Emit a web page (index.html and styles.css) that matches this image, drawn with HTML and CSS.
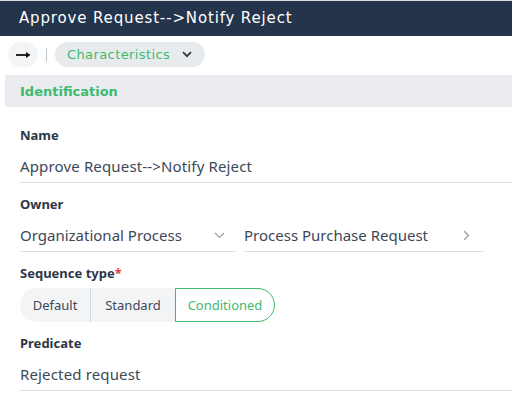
FILE: index.html
```html
<!DOCTYPE html>
<html lang="en">
<head>
    <meta charset="UTF-8">
    <meta name="viewport" content="width=device-width, initial-scale=1.0">
    <title>Approve Request--&gt;Notify Reject</title>
    <link rel="stylesheet" href="styles.css">
</head>
<body>

<header class="title-bar">Approve Request--&gt;Notify Reject</header>

<div class="toolbar">
    <button type="button" class="back-btn" title="Back">
        <svg width="15" height="8" viewBox="0 0 15 8">
            <path d="M0 4H13" stroke="#111" stroke-width="1.8"/>
            <path d="M10 1L14.5 4L10 7Z" fill="#111"/>
        </svg>
    </button>
    <span class="divider"></span>
    <button type="button" class="chip">
        Characteristics
        <svg width="10" height="7" viewBox="0 0 10 7">
            <path d="M1 1.2L5 5.2L9 1.2" fill="none" stroke="#2d3a4b" stroke-width="1.8"/>
        </svg>
    </button>
</div>

<section class="panel">
    <div class="section-head">Identification</div>

    <div class="form">
        <div class="field">
            <label>Name</label>
            <div class="value wide">Approve Request--&gt;Notify Reject</div>
        </div>

        <div class="field">
            <label>Owner</label>
            <div class="owner-row">
                <div class="value select first">
                    <span>Organizational Process</span>
                    <svg width="11" height="7" viewBox="0 0 11 7">
                        <path d="M1 1L5.5 5.5L10 1" fill="none" stroke="#9aa1ab" stroke-width="1.2"/>
                    </svg>
                </div>
                <div class="value select second">
                    <span>Process Purchase Request</span>
                    <svg width="7" height="11" viewBox="0 0 7 11">
                        <path d="M1 1L5.5 5.5L1 10" fill="none" stroke="#9aa1ab" stroke-width="1.4"/>
                    </svg>
                </div>
            </div>
        </div>

        <div class="field">
            <label class="tight">Sequence type<span class="req">*</span></label>
            <div class="segmented">
                <button type="button" class="seg">Default</button>
                <button type="button" class="seg">Standard</button>
                <button type="button" class="seg selected">Conditioned</button>
            </div>
        </div>

        <div class="field">
            <label>Predicate</label>
            <div class="value wide">Rejected request</div>
        </div>
    </div>
</section>

</body>
</html>
```

FILE: styles.css
```css
body {
    margin: 0;
    font-family: "Noto Sans", Arial, sans-serif;
    color: #3c4858;
    background: #fff;
    overflow: hidden;
}
.title-bar {
    background-color: #23344b;
    border-top: 1px solid #d9dde2;
    color: #fff;
    font-family: "DejaVu Sans", sans-serif;
    font-size: 15px;
    letter-spacing: 0.85px;
    height: 35px;
    line-height: 35px;
    padding-left: 19px;
}
.toolbar {
    display: flex;
    align-items: center;
    padding: 6px 0 0 8px;
    height: 25px;
}
.back-btn {
    width: 30px;
    height: 25px;
    border: none;
    border-radius: 13px;
    background-color: #f3f4f6;
    display: flex;
    align-items: center;
    justify-content: center;
    padding: 0;
    cursor: pointer;
}
.divider {
    width: 1px;
    height: 14px;
    background-color: #b9c7d3;
    margin: 0 8px;
}
.chip {
    height: 25px;
    border: none;
    border-radius: 13px;
    background-color: #e8ebee;
    color: #3dba6f;
    font-family: "DejaVu Sans", sans-serif;
    font-size: 13px;
    letter-spacing: 0.4px;
    padding: 0 13px 0 12px;
    display: flex;
    align-items: center;
    gap: 12px;
    cursor: pointer;
}
.panel {
    margin: 8px 0 0 5px;
}
.section-head {
    background-color: #ebecf0;
    height: 32px;
    line-height: 33px;
    padding-left: 15px;
    color: #3dba6f;
    font-family: "DejaVu Sans", sans-serif;
    font-weight: bold;
    font-size: 13px;
}
.form {
    padding: 18px 0 0 15px;
}
.field {
    margin-bottom: 11px;
}
label {
    display: block;
    height: 20px;
    line-height: 20px;
    margin-bottom: 6px;
    font-weight: bold;
    font-size: 13px;
    color: #2d3748;
}
label.tight {
    margin-bottom: 5px;
}
.req {
    color: #e53e3e;
}
.value {
    height: 31px;
    line-height: 31px;
    font-size: 15px;
    border-bottom: 1px solid #dcdfe3;
    color: #3c4858;
}
.value.wide {
    letter-spacing: 0.15px;
}
.owner-row {
    display: flex;
    gap: 8px;
}
.select {
    display: flex;
    align-items: center;
    justify-content: space-between;
}
.select.first {
    width: 216px;
}
.select.first svg {
    margin-right: 11px;
}
.select.second {
    width: 240px;
}
.select.second svg {
    margin-right: 14px;
}
.segmented {
    display: flex;
    height: 34px;
}
.seg {
    border: none;
    background-color: #f3f4f6;
    font-family: "Noto Sans", Arial, sans-serif;
    font-size: 13px;
    color: #3c4858;
    padding: 0;
    cursor: pointer;
}
.seg:first-child {
    width: 71px;
    border-radius: 17px 0 0 17px;
    border-right: 1px solid #d4d9df;
}
.seg:nth-child(2) {
    width: 84px;
}
.seg.selected {
    width: 100px;
    background-color: #fff;
    color: #3dba6f;
    border: 1px solid #3dba6f;
    border-radius: 0 17px 17px 0;
}
```
